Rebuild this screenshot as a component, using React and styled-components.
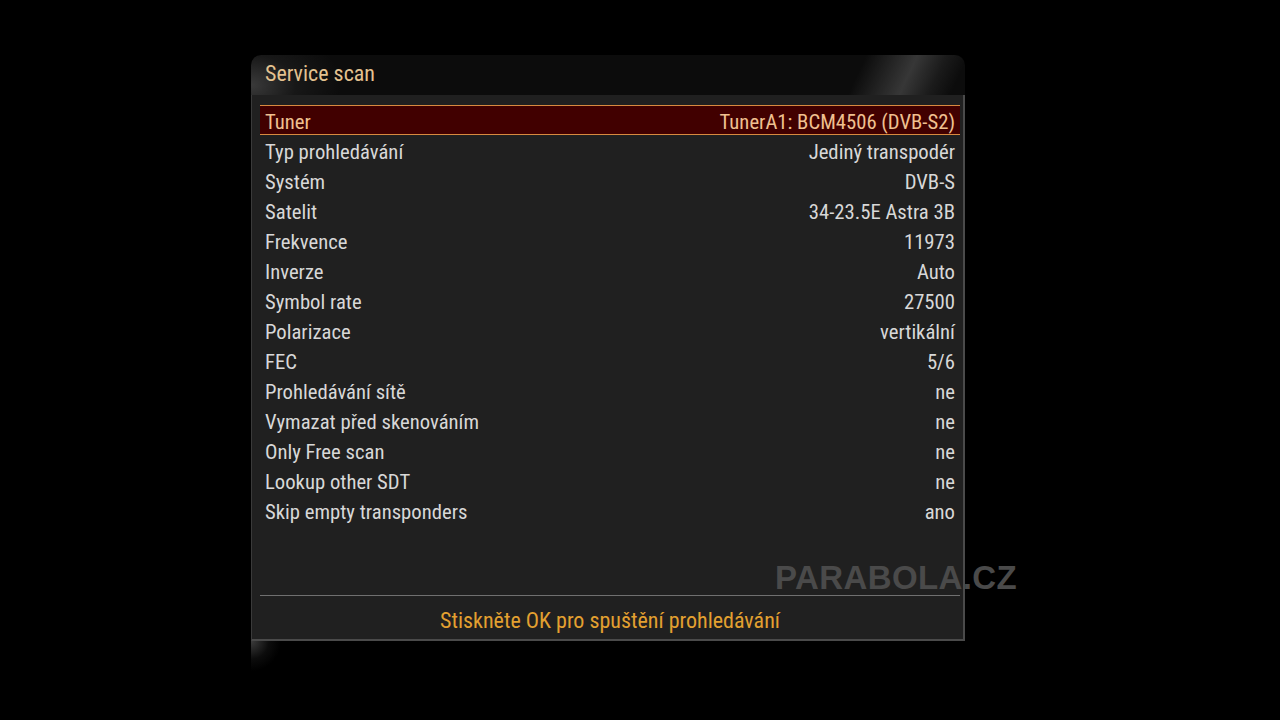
import styled, { createGlobalStyle } from "styled-components";

const GlobalStyle = createGlobalStyle`
  html, body {
    margin: 0;
    padding: 0;
    background: #000;
  }
  body {
    width: 1280px;
    height: 720px;
    overflow: hidden;
  }
`;

const FONT = `"Roboto Condensed", "Liberation Sans Narrow", "Roboto", sans-serif`;

const Screen = styled.div`
  position: relative;
  width: 1280px;
  height: 720px;
  background: #000;
  padding-top: 55px;
  box-sizing: border-box;
  font-family: ${FONT};
`;

const Window = styled.div`
  position: relative;
  width: 714px;
  margin-left: 251px;
`;

const TitleBar = styled.div`
  position: relative;
  height: 40px;
  border-radius: 10px 10px 0 0;
  background:
    linear-gradient(115deg, transparent 0, transparent 84%, rgba(90, 90, 90, 0.55) 91%, rgba(60, 60, 60, 0.3) 95%, transparent 98%),
    radial-gradient(ellipse 90px 60px at 0 30px, #3a3a3a 0, rgba(40, 40, 40, 0.4) 50%, transparent 100%),
    #0c0c0c;
  display: flex;
  align-items: center;
  padding-left: 14px;
`;

const Title = styled.div`
  color: #e3c290;
  font-size: 22px;
  margin-top: -3px;
`;

const Body = styled.div`
  height: 546px;
  background: #202020;
  border-right: 2px solid #4a4a4a;
  border-bottom: 2px solid #4a4a4a;
  border-left: 1px solid #3a3a3a;
  box-sizing: border-box;
  padding: 10px 3px 0 8px;
  display: flex;
  flex-direction: column;
`;

const List = styled.div`
  display: flex;
  flex-direction: column;
  height: 490px;
`;

const Row = styled.div`
  height: 30px;
  display: flex;
  justify-content: space-between;
  align-items: center;
  padding: 3px 5px 0 5px;
  box-sizing: border-box;
  font-size: 20.7px;
  color: ${(p) => (p.$active ? "#f0c090" : "#d8d8d8")};
  background: ${(p) => (p.$active ? "#410000" : "transparent")};
  border-top: 1px solid ${(p) => (p.$active ? "#d88a40" : "transparent")};
  border-bottom: 1px solid ${(p) => (p.$active ? "#d88a40" : "transparent")};
`;

const Separator = styled.div`
  height: 1px;
  background: #707070;
`;

const Footer = styled.div`
  flex: 1;
  display: flex;
  align-items: center;
  justify-content: center;
  color: #e3a030;
  font-size: 22px;
  padding-top: 6px;
`;

const Glow = styled.div`
  position: absolute;
  left: 0;
  top: 100%;
  width: 30px;
  height: 30px;
  background: radial-gradient(ellipse 30px 30px at 0 0, #3c3c3c 0, rgba(40, 40, 40, 0.3) 60%, transparent 100%);
`;

const Watermark = styled.div`
  position: absolute;
  left: 775px;
  top: 559px;
  font-family: "Liberation Sans", Arial, sans-serif;
  font-weight: bold;
  font-size: 33px;
  color: #4a4a4a;
  letter-spacing: 0.4px;
`;

const rows = [
  ["Tuner", "TunerA1: BCM4506 (DVB-S2)"],
  ["Typ prohledávání", "Jediný transpodér"],
  ["Systém", "DVB-S"],
  ["Satelit", "34-23.5E Astra 3B"],
  ["Frekvence", "11973"],
  ["Inverze", "Auto"],
  ["Symbol rate", "27500"],
  ["Polarizace", "vertikální"],
  ["FEC", "5/6"],
  ["Prohledávání sítě", "ne"],
  ["Vymazat před skenováním", "ne"],
  ["Only Free scan", "ne"],
  ["Lookup other SDT", "ne"],
  ["Skip empty transponders", "ano"],
];

export default function App() {
  return (
    <Screen>
      <GlobalStyle />
      <Window>
        <TitleBar>
          <Title>Service scan</Title>
        </TitleBar>
        <Body>
          <List>
            {rows.map(([label, value], i) => (
              <Row key={label} $active={i === 0}>
                <span>{label}</span>
                <span>{value}</span>
              </Row>
            ))}
          </List>
          <Separator />
          <Footer>Stiskněte OK pro spuštění prohledávání</Footer>
        </Body>
        <Glow />
      </Window>
      <Watermark>PARABOLA.CZ</Watermark>
    </Screen>
  );
}
